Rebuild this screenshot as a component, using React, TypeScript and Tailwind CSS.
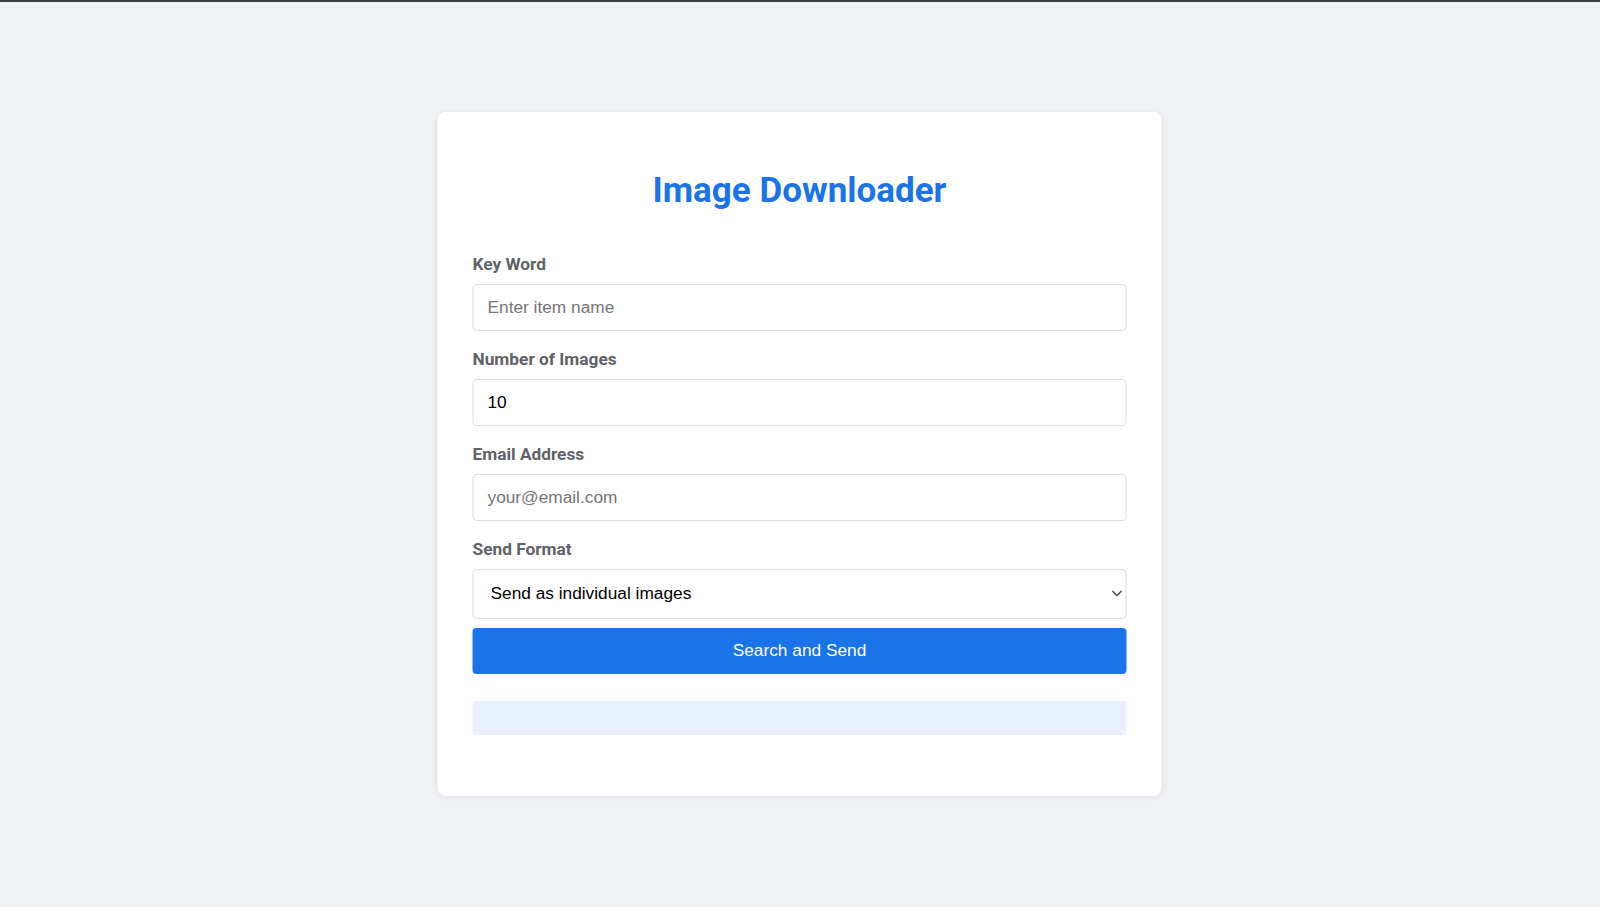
import { useState } from 'react';

const label = 'block h-[20px] text-[17.3px] font-bold leading-[20px] text-[#5f6368] font-["Roboto","Liberation_Sans",sans-serif]';
const field =
  'block w-full h-[47px] rounded-[4px] border border-[#dadce0] bg-white px-[14px] text-[17.3px] text-black placeholder:text-[#757575] outline-none font-["Liberation_Sans","Arial",sans-serif]';

export default function App() {
  const [keyword, setKeyword] = useState('');
  const [count, setCount] = useState('10');
  const [email, setEmail] = useState('');
  const [format, setFormat] = useState('individual');

  return (
    <div className="min-h-screen bg-[#f0f1f5]">
      <div className="h-[2px] bg-[#3c3d43]" />
      <div className="mx-auto mt-[110px] w-[724px] -translate-x-[0.5px] rounded-[8px] bg-white px-[35px] pt-[58px] pb-[61px] shadow-[0_1px_6px_rgba(0,0,0,0.08)]">
        <h1 className='text-center text-[35px] font-bold leading-[42px] text-[#1a73e8] font-["Roboto","Liberation_Sans",sans-serif]'>
          Image Downloader
        </h1>

        <form className="mt-[42px] flex flex-col" onSubmit={(e) => e.preventDefault()}>
          <label className={label}>Key Word</label>
          <input className={`${field} mt-[10px]`} placeholder="Enter item name" value={keyword} onChange={(e) => setKeyword(e.target.value)} />

          <label className={`${label} mt-[18px]`}>Number of Images</label>
          <input className={`${field} mt-[10px]`} type="text" value={count} onChange={(e) => setCount(e.target.value)} />

          <label className={`${label} mt-[18px]`}>Email Address</label>
          <input className={`${field} mt-[10px]`} placeholder="your@email.com" value={email} onChange={(e) => setEmail(e.target.value)} />

          <label className={`${label} mt-[18px]`}>Send Format</label>
          <div className="relative mt-[10px]">
            <select
              className='block h-[50px] w-full appearance-none rounded-[4px] border border-[#dadce0] bg-white px-[17px] text-[17.3px] text-black outline-none font-["Liberation_Sans","Arial",sans-serif]'
              value={format}
              onChange={(e) => setFormat(e.target.value)}
            >
              <option value="individual">Send as individual images</option>
              <option value="zip">Send as zip file</option>
            </select>
            <svg className="pointer-events-none absolute right-[4px] top-[21px] h-[7px] w-[11px]" viewBox="0 0 11 7" fill="none">
              <path d="M1 1l4.5 4.5L10 1" stroke="#3c4043" strokeWidth="1.3" />
            </svg>
          </div>

          <button
            type="submit"
            className='mt-[9px] h-[46px] w-full rounded-[4px] bg-[#1a73e8] text-[17.3px] text-white font-["Liberation_Sans","Arial",sans-serif]'
          >
            Search and Send
          </button>

          <div className="mt-[27px] h-[34px] rounded-[4px] bg-[#e8f0fe]" />
        </form>
      </div>
    </div>
  );
}
